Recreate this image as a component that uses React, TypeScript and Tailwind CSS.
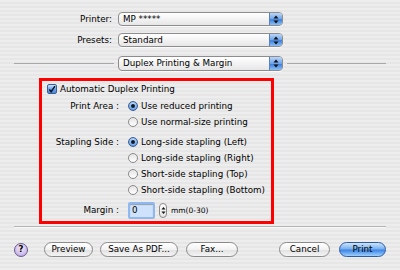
import React from "react";

const font = { fontFamily: '"DejaVu Sans", "Liberation Sans", sans-serif' };

function Arrows({ color = "#111" }: { color?: string }) {
  return (
    <svg width="6" height="9" viewBox="0 0 6 9">
      <path d="M3 0.5 L5.5 3.5 L0.5 3.5 Z" fill={color} />
      <path d="M3 8.5 L5.5 5.5 L0.5 5.5 Z" fill={color} />
    </svg>
  );
}

function Popup({ text, className = "" }: { text: string; className?: string }) {
  return (
    <div
      className={`flex h-[14px] w-[165px] items-stretch overflow-hidden rounded-[4px] border border-[#8d8d8d] bg-[linear-gradient(to_bottom,#ffffff,#f3f3f3_50%,#e6e6e6)] shadow-[0_1px_0_rgba(255,255,255,0.8)] ${className}`}
    >
      <div className="flex flex-1 items-center pl-[4px] text-[8.75px] leading-none text-black">{text}</div>
      <div className="flex w-[13px] items-center justify-center border-l border-[#5a82b8] bg-[linear-gradient(to_bottom,#bcd6f6,#6ea4ea_50%,#3f7fd8_55%,#8cc0f6)]">
        <Arrows />
      </div>
    </div>
  );
}

function Radio({ on }: { on?: boolean }) {
  return on ? (
    <div className="flex h-[10px] w-[10px] items-center justify-center rounded-full border border-[#3a5f95] bg-[radial-gradient(circle_at_50%_35%,#d6e8fb,#6ba3e6_70%,#3d78cc)]">
      <div className="h-[4px] w-[4px] rounded-full bg-[#0d1a2e]" />
    </div>
  ) : (
    <div className="h-[10px] w-[10px] rounded-full border border-[#8a8a8a] bg-[linear-gradient(to_bottom,#e4e4e4,#ffffff)]" />
  );
}

function Row({
  label,
  children,
  className = "",
}: {
  label?: string;
  children: React.ReactNode;
  className?: string;
}) {
  return (
    <div className={`flex h-[16px] items-center ${className}`}>
      <div className="w-[78px] pr-[1px] text-right text-[8.75px] leading-none">{label}</div>
      <div className="ml-[8px] flex items-center">{children}</div>
    </div>
  );
}

function RadioItem({ on, text }: { on?: boolean; text: string }) {
  return (
    <div className="flex items-center gap-[3px]">
      <Radio on={on} />
      <span className="text-[8.75px] leading-none">{text}</span>
    </div>
  );
}

function Btn({ children, w }: { children: React.ReactNode; w: string }) {
  return (
    <div
      className={`flex h-[15px] ${w} items-center justify-center rounded-full border border-[#8a8a8a] bg-[linear-gradient(to_bottom,#ffffff,#f2f2f2_50%,#e2e2e2_55%,#f4f4f4)] text-[8.75px] leading-none text-black`}
    >
      {children}
    </div>
  );
}

export default function App() {
  return (
    <div
      style={font}
      className="relative h-[270px] w-[400px] overflow-hidden bg-[repeating-linear-gradient(to_bottom,#ededed_0px,#ededed_2px,#e6e6e6_2px,#e6e6e6_4px)] text-black"
    >
      <div className="flex flex-col pt-[12px]">
        <div className="flex h-[14px] items-center">
          <div className="w-[112px] text-right text-[8.75px] leading-none">Printer:</div>
          <Popup text="MP *****" className="ml-[6px]" />
        </div>
        <div className="mt-[7px] flex h-[14px] items-center">
          <div className="w-[112px] text-right text-[8.75px] leading-none">Presets:</div>
          <Popup text="Standard" className="ml-[6px]" />
        </div>
        <div className="mt-[9px] flex h-[15px] items-center">
          <div className="ml-[14px] h-[2px] w-[100px] border-t border-[#a9a9a9] border-b-white" />
          <Popup text="Duplex Printing & Margin" className="ml-[4px] h-[15px]" />
          <div className="ml-[4px] h-[2px] w-[99px] border-t border-[#a9a9a9]" />
        </div>

        <div className="ml-[39px] mt-[7px] flex h-[146px] w-[235px] flex-col border-[3px] border-[#ff0000]">
          <div className="flex h-[16px] items-center pl-[5px]">
            <div className="flex h-[10px] w-[10px] items-center justify-center rounded-[2px] border border-[#3a5f95] bg-[linear-gradient(to_bottom,#cfe3fa,#6ea4ea_50%,#4a86d9)]">
              <svg width="9" height="9" viewBox="0 0 9 9">
                <path d="M1.5 4.5 L3.6 7 L7.8 0.8" stroke="#0b1422" strokeWidth="1.6" fill="none" />
              </svg>
            </div>
            <span className="ml-[3px] text-[8.75px] leading-none">Automatic Duplex Printing</span>
          </div>
          <Row label="Print Area :" className="mt-[1px]">
            <RadioItem on text="Use reduced printing" />
          </Row>
          <Row>
            <RadioItem text="Use normal-size printing" />
          </Row>
          <Row label="Stapling Side :" className="mt-[4px]">
            <RadioItem on text="Long-side stapling (Left)" />
          </Row>
          <Row>
            <RadioItem text="Long-side stapling (Right)" />
          </Row>
          <Row>
            <RadioItem text="Short-side stapling (Top)" />
          </Row>
          <Row>
            <RadioItem text="Short-side stapling (Bottom)" />
          </Row>
          <div className="mt-[4px] flex h-[17px] items-center">
            <div className="w-[78px] pr-[1px] text-right text-[8.75px] leading-none">Margin :</div>
            <div className="ml-[8px] flex h-[17px] w-[27px] items-center rounded-[2px] border-2 border-[#8fb9ee] bg-[#cfe2fb] pl-[2px] text-[8.75px] leading-none shadow-[inset_0_1px_1px_rgba(0,0,0,0.3)]">
              0
            </div>
            <div className="ml-[4px] flex h-[15px] w-[8px] items-center justify-center rounded-[4px] border border-[#8a8a8a] bg-[linear-gradient(to_bottom,#ffffff,#e4e4e4)]">
              <svg width="5" height="9" viewBox="0 0 5 9">
                <path d="M2.5 1 L4.5 3.5 L0.5 3.5 Z" fill="#111" />
                <path d="M2.5 8 L4.5 5.5 L0.5 5.5 Z" fill="#111" />
              </svg>
            </div>
            <span className="ml-[4px] text-[7.5px] leading-none">mm(0-30)</span>
          </div>
        </div>

        <div className="ml-[14px] mt-[2px] h-[2px] w-[372px] border-t border-[#b4b4b4] bg-white/70" />

        <div className="mt-[14px] flex h-[15px] items-center">
          <div className="ml-[14px] flex h-[14px] w-[14px] items-center justify-center rounded-full border border-[#6b5a8a] bg-[radial-gradient(circle_at_50%_35%,#f4eefc,#c9b6ea_70%,#a58bd4)] text-[8.5px] font-bold leading-none">
            ?
          </div>
          <div className="ml-[16px]">
            <Btn w="w-[49px]">Preview</Btn>
          </div>
          <div className="ml-[7px]">
            <Btn w="w-[78px]">Save As PDF...</Btn>
          </div>
          <div className="ml-[8px]">
            <Btn w="w-[52px]">Fax...</Btn>
          </div>
          <div className="ml-[41px]">
            <Btn w="w-[51px]">Cancel</Btn>
          </div>
          <div className="ml-[9px] flex h-[15px] w-[47px] items-center justify-center rounded-full border border-[#2d5aa8] bg-[linear-gradient(to_bottom,#cfe4fb,#78b0ef_45%,#3e85e6_55%,#9fd0fb)] text-[8.75px] leading-none text-black">
            Print
          </div>
        </div>
      </div>
    </div>
  );
}
